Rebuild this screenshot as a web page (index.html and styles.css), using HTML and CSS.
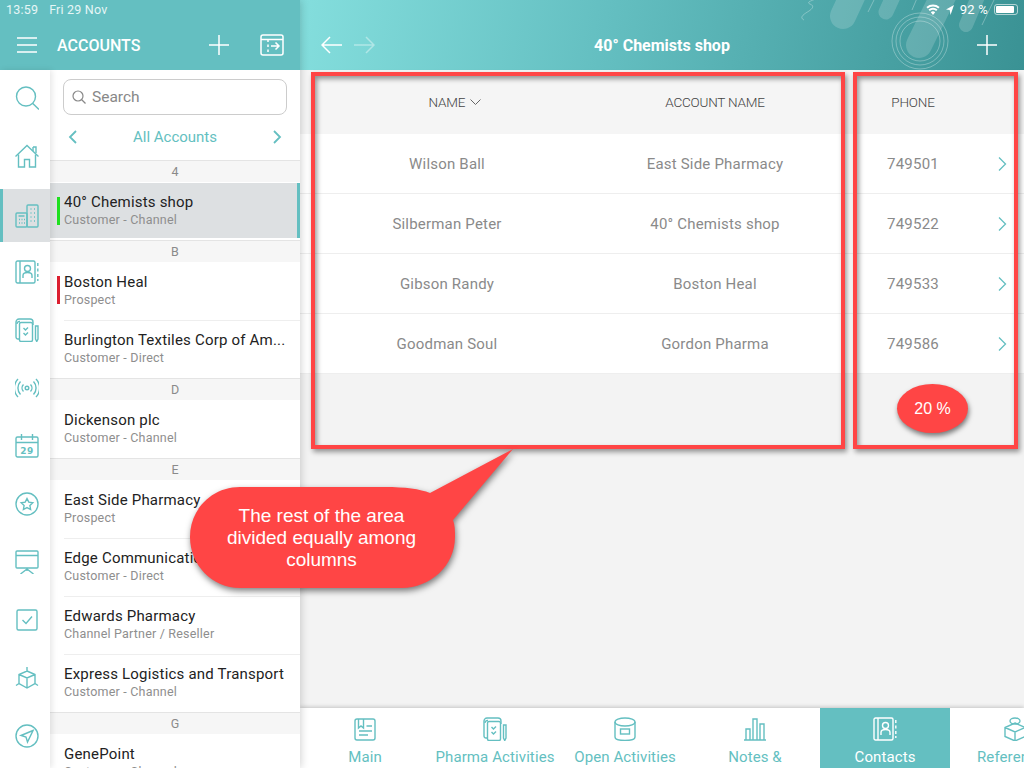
FILE: index.html
```html
<!DOCTYPE html>
<html lang="en">
<head>
    <meta charset="UTF-8">
    <meta name="viewport" content="width=device-width, initial-scale=1.0">
    <title>Accounts</title>
    <link rel="stylesheet" href="styles.css">
</head>
<body>
    <svg class="sprites" width="0" height="0">
        <symbol id="i-contacts" viewBox="0 0 24 24">
            <rect x="1" y="1" width="19" height="22" rx="1.5"/>
            <path d="M5 1v22"/>
            <circle cx="12.5" cy="8.5" r="3"/>
            <path d="M8 18v-2.5c0-2 2-3 4.500-3s4.500 1 4.500 3V18"/>
            <path d="M22.800 3v3M22.800 8.500v3M22.800 14v3M22.800 19v2"/>
        </symbol>
        <symbol id="i-pharma" viewBox="0 0 24 24">
            <path d="M4 21H3a2 2 0 0 1-2-2V4a3 3 0 0 1 3-3h11a3 3 0 0 1 3 3v3"/>
            <path d="M2 6a2.500 2.500 0 0 1 3-2.500"/>
            <rect x="4.500" y="4.500" width="13" height="19" rx="1.500"/>
            <path d="M8.500 10l2 2 2.500-2.500M8.500 15l2 2 2.500-2.500"/>
            <path d="M20.500 8h2.500v13l-1.250 2.500L20.500 21z"/>
        </symbol>
    </svg>

    <div class="app">
        <aside class="left">
            <header class="left-head">
                <div class="status">
                    <span class="status-time">13:59</span>
                    <span>Fri 29 Nov</span>
                </div>
                <div class="left-bar">
                    <svg class="ic-menu" width="20" height="16" viewBox="0 0 20 16"><path d="M0 1h20M0 8h20M0 15h20"/></svg>
                    <span class="left-title">ACCOUNTS</span>
                    <svg class="ic-plus" width="20" height="20" viewBox="0 0 20 20"><path d="M10 0v20M0 10h20"/></svg>
                    <svg class="ic-split" width="24" height="22" viewBox="0 0 24 22">
                        <rect x="1" y="1" width="22" height="20" rx="2"/>
                        <path d="M1 5.500h22M8 5.500V8M8 10.500v2.500M8 15.500V18"/>
                        <path d="M11 12h8M15.500 8.500l3.500 3.500-3.500 3.500"/>
                    </svg>
                </div>
            </header>
            <div class="left-body">
                <nav class="rail">
                    <a class="rail-item"><svg class="ic" viewBox="0 0 24 24"><circle cx="11" cy="10.500" r="9.500"/><path d="M17.800 17.500L24 23.500"/></svg></a>
                    <a class="rail-item"><svg class="ic" viewBox="0 0 24 24"><path d="M0.500 12.500L12 1.500l11.500 11"/><path d="M18 3v4M18 3h3v6"/><path d="M3.500 10.500V23h6v-7.500h5V23h6V10.500"/></svg></a>
                    <a class="rail-item active"><svg class="ic" viewBox="0 0 24 24"><rect x="1" y="9" width="11" height="14" rx="1"/><rect x="12" y="1" width="11" height="22" rx="1"/><path d="M3.500 12h6M4 15.500h1M6.500 15.500h1M9 15.500h1M4 19h1M6.500 19h1M9 19h1M15.500 5h1M19 5h1M15.500 9h1M19 9h1M15.500 13h1M19 13h1M15.500 17h1M19 17h1"/></svg></a>
                    <a class="rail-item"><svg class="ic"><use href="#i-contacts"/></svg></a>
                    <a class="rail-item"><svg class="ic"><use href="#i-pharma"/></svg></a>
                    <a class="rail-item"><svg class="ic" viewBox="0 0 24 24"><circle cx="12" cy="12" r="1.800"/><path d="M8.500 8.500a5 5 0 0 0 0 7M15.500 8.500a5 5 0 0 1 0 7M5.500 5.500a9.500 9.500 0 0 0 0 13M18.500 5.500a9.500 9.500 0 0 1 0 13M3 3a13 13 0 0 0 0 18M21 3a13 13 0 0 1 0 18"/></svg></a>
                    <a class="rail-item"><svg class="ic" viewBox="0 0 24 24"><rect x="1" y="3" width="22" height="20" rx="1.500"/><path d="M1 8.500h22M6.500 0v6M17.500 0v6"/><text class="ic-date" x="12" y="20">29</text></svg></a>
                    <a class="rail-item"><svg class="ic" viewBox="0 0 24 24"><circle cx="12" cy="12" r="11"/><path d="M12 6.500l1.800 3.600 4 .6-2.900 2.800.7 4L12 15.600l-3.600 1.900.7-4-2.900-2.800 4-.6z"/></svg></a>
                    <a class="rail-item"><svg class="ic" viewBox="0 0 24 24"><rect x="1" y="1" width="22" height="17" rx="1"/><path d="M1 5.500h22M12 18v3M12 19L5.500 24M12 19l6.500 5"/></svg></a>
                    <a class="rail-item"><svg class="ic" viewBox="0 0 24 24"><rect x="2" y="2" width="20" height="20" rx="1.500"/><path d="M7.500 12l3.500 3.500 6-7"/></svg></a>
                    <a class="rail-item"><svg class="ic" viewBox="0 0 24 24"><path d="M12 5l8 3.500v9L12 22l-8-4.500v-9zM4 8.500L12 12l8-3.500M12 12v10M12 5V1M4 17.500L1 19.500M20 17.500l3 2"/></svg></a>
                    <a class="rail-item"><svg class="ic" viewBox="0 0 24 24"><circle cx="12" cy="12" r="11"/><path d="M18 6.500L6 11.500l5 1.500 1.500 5z"/></svg></a>
                </nav>
                <div class="list">
                    <div class="search">
                        <svg class="ic-search" width="14" height="14" viewBox="0 0 14 14"><circle cx="6" cy="6" r="5"/><path d="M9.500 9.500L13.500 13.500"/></svg>
                        <span>Search</span>
                    </div>
                    <div class="list-nav">
                        <svg class="ic-chev" width="9" height="14" viewBox="0 0 9 14"><path d="M8 1L2 7l6 6"/></svg>
                        <span>All Accounts</span>
                        <svg class="ic-chev" width="9" height="14" viewBox="0 0 9 14"><path d="M1 1l6 6-6 6"/></svg>
                    </div>
                    <div class="section">4</div>
                    <div class="item selected flag-green">
                        <div class="item-name">40° Chemists shop</div>
                        <div class="item-sub">Customer - Channel</div>
                    </div>
                    <div class="section">B</div>
                    <div class="item flag-red">
                        <div class="item-name">Boston Heal</div>
                        <div class="item-sub">Prospect</div>
                    </div>
                    <div class="item">
                        <div class="item-name">Burlington Textiles Corp of Am...</div>
                        <div class="item-sub">Customer - Direct</div>
                    </div>
                    <div class="section">D</div>
                    <div class="item">
                        <div class="item-name">Dickenson plc</div>
                        <div class="item-sub">Customer - Channel</div>
                    </div>
                    <div class="section">E</div>
                    <div class="item">
                        <div class="item-name">East Side Pharmacy</div>
                        <div class="item-sub">Prospect</div>
                    </div>
                    <div class="item">
                        <div class="item-name">Edge Communications</div>
                        <div class="item-sub">Customer - Direct</div>
                    </div>
                    <div class="item">
                        <div class="item-name">Edwards Pharmacy</div>
                        <div class="item-sub">Channel Partner / Reseller</div>
                    </div>
                    <div class="item">
                        <div class="item-name">Express Logistics and Transport</div>
                        <div class="item-sub">Customer - Channel</div>
                    </div>
                    <div class="section">G</div>
                    <div class="item">
                        <div class="item-name">GenePoint</div>
                        <div class="item-sub">Customer - Channel</div>
                    </div>
                </div>
            </div>
        </aside>

        <main class="main">
            <header class="main-head">
                <svg class="head-art" width="260" height="70" viewBox="0 0 260 70">
                    <g class="art-pills">
                        <path d="M79 16L92 -12" stroke-width="26"/>
                        <path d="M122 12L132 -10" stroke-width="15"/>
                        <path d="M202 25L216 -8" stroke-width="14"/>
                        <path d="M155 45L182 -10" stroke-width="26"/>
                    </g>
                    <g class="art-lines">
                        <path d="M104 12L112 -4M218 25L230 0M148 10L154 -4"/>
                        <path d="M40 20c-6-3 2-7 5-9s6-5 1-7 4-4 8-6"/>
                        <circle cx="156" cy="41" r="28"/>
                        <circle cx="156" cy="41" r="24"/>
                        <circle cx="156" cy="41" r="20"/>
                    </g>
                </svg>
                <div class="status status-right">
                    <svg class="ic-wifi" width="14" height="11" viewBox="0 0 14 11"><path d="M7 11L4.800 8.300a3.400 3.400 0 0 1 4.400 0zM3.800 7.100L2.500 5.500a7 7 0 0 1 9 0l-1.300 1.600a5 5 0 0 0-6.400 0zM1.700 4.500L.4 3a10.300 10.300 0 0 1 13.200 0l-1.300 1.500a8.300 8.300 0 0 0-10.600 0z"/></svg>
                    <svg class="ic-loc" width="8" height="10" viewBox="0 0 8 10"><path d="M8 0L0 4.500l3.700.6L4.500 10z"/></svg>
                    <span>92 %</span>
                    <span class="battery"><span class="battery-fill"></span></span>
                </div>
                <div class="main-bar">
                    <div class="main-arrows">
                        <svg class="ic-arrow" width="21" height="18" viewBox="0 0 21 18"><path d="M21 9H1M9 1L1 9l8 8"/></svg>
                        <svg class="ic-arrow dim" width="21" height="18" viewBox="0 0 21 18"><path d="M0 9h20M12 1l8 8-8 8"/></svg>
                    </div>
                    <span class="main-title">40° Chemists shop</span>
                    <svg class="ic-plus" width="20" height="20" viewBox="0 0 20 20"><path d="M10 0v20M0 10h20"/></svg>
                </div>
            </header>

            <section class="grid">
                <div class="row row-head">
                    <div class="col-sorted">NAME <svg class="ic-sort" width="11" height="6" viewBox="0 0 11 6"><path d="M.5.5l5 5 5-5"/></svg></div>
                    <div>ACCOUNT NAME</div>
                    <div>PHONE</div>
                    <div></div>
                </div>
                <div class="row">
                    <div>Wilson Ball</div>
                    <div>East Side Pharmacy</div>
                    <div>749501</div>
                    <svg class="ic-next" width="9" height="14" viewBox="0 0 9 14"><path d="M1 .5L7.500 7 1 13.500"/></svg>
                </div>
                <div class="row">
                    <div>Silberman Peter</div>
                    <div>40° Chemists shop</div>
                    <div>749522</div>
                    <svg class="ic-next" width="9" height="14" viewBox="0 0 9 14"><path d="M1 .5L7.500 7 1 13.500"/></svg>
                </div>
                <div class="row">
                    <div>Gibson Randy</div>
                    <div>Boston Heal</div>
                    <div>749533</div>
                    <svg class="ic-next" width="9" height="14" viewBox="0 0 9 14"><path d="M1 .5L7.500 7 1 13.500"/></svg>
                </div>
                <div class="row">
                    <div>Goodman Soul</div>
                    <div>Gordon Pharma</div>
                    <div>749586</div>
                    <svg class="ic-next" width="9" height="14" viewBox="0 0 9 14"><path d="M1 .5L7.500 7 1 13.500"/></svg>
                </div>
            </section>

            <nav class="tabs">
                <a class="tab">
                    <svg class="ic" viewBox="0 0 24 24"><rect x="2" y="2" width="20" height="21" rx="2"/><path d="M5.500 2v9l2.500-2 2.500 2V2M13.500 9H19M6 14h13M6 18h9"/></svg>
                    <span>Main</span>
                </a>
                <a class="tab">
                    <svg class="ic"><use href="#i-pharma"/></svg>
                    <span>Pharma Activities</span>
                </a>
                <a class="tab">
                    <svg class="ic" viewBox="0 0 24 24"><ellipse cx="12" cy="5" rx="10" ry="4"/><path d="M2 5v15c0 2 4 3.500 10 3.500s10-1.500 10-3.500V5"/><rect x="7.500" y="12" width="9" height="5"/></svg>
                    <span>Open Activities</span>
                </a>
                <a class="tab">
                    <svg class="ic" viewBox="0 0 24 24"><path d="M1 23h22M3 23V12h4v11M10 23V2h4v21M17 23V7h4v16"/></svg>
                    <span>Notes &amp;</span>
                </a>
                <a class="tab current">
                    <svg class="ic"><use href="#i-contacts"/></svg>
                    <span>Contacts</span>
                </a>
                <a class="tab">
                    <svg class="ic" viewBox="0 0 24 24"><path d="M12 6l10 4.500v9L12 24 2 19.500v-9zM2 10.500L12 15l10-4.500M12 15v9"/><ellipse cx="12" cy="4" rx="5" ry="3"/></svg>
                    <span>References</span>
                </a>
            </nav>
        </main>
    </div>

    <!-- annotations drawn over the screenshot -->
    <div class="mark mark-left"></div>
    <div class="mark mark-right"></div>
    <div class="badge">20 %</div>
    <div class="callout">
        <svg class="callout-shape" width="323" height="139" viewBox="0 0 323 139">
            <path d="M50 38H195C215 38 230 40 240 44L323 0 263 71C265 76 265 82 265 88 265 117 240 139 212 139H50C22 139 0 116 0 88S22 38 50 38z"/>
        </svg>
        <p class="callout-text">The rest of the area<br>divided equally among<br>columns</p>
    </div>
</body>
</html>
```

FILE: styles.css
```css
* {
    box-sizing: border-box;
}
html, body {
    margin: 0;
    height: 768px;
    overflow: hidden;
}
body {
    font-family: Roboto, "Liberation Sans", sans-serif;
    color: #222;
}
svg {
    fill: none;
    flex: none;
}
.sprites {
    display: block;
}

.app {
    display: grid;
    grid-template-columns: 300px 1fr;
    height: 768px;
}

/* left column */
.left {
    display: flex;
    flex-direction: column;
    min-height: 0;
    position: relative;
    z-index: 2;
    box-shadow: 1px 0 8px rgba(0, 0, 0, .18);
}
.left-head {
    height: 70px;
    background: #64bfc1;
    color: #fff;
    padding: 0 16px 0 6px;
    flex: none;
}
.status {
    display: flex;
    gap: 11px;
    height: 19px;
    align-items: center;
    font-size: 12.500px;
    letter-spacing: .2px;
    color: #e6f6f6;
}
.left-bar {
    display: flex;
    align-items: center;
    height: 32px;
    margin-top: 10px;
    padding-left: 11px;
}
.left-bar svg, .main-bar svg {
    stroke: #fff;
    stroke-width: 1.500;
}
.ic-menu {
    margin-right: 20px;
}
.left-title {
    font-size: 16px;
    font-weight: 500;
    width: 152px;
    padding-top: 1px;
}
.ic-split {
    margin-left: 31px;
}
.left-body {
    display: flex;
    flex: 1;
    min-height: 0;
}
.rail {
    width: 50px;
    flex: none;
    background: #fff;
    position: relative;
    z-index: 1;
    box-shadow: 2px 0 6px rgba(0, 0, 0, .1);
}
.rail-item {
    display: flex;
    align-items: center;
    justify-content: center;
    height: 58px;
    padding: 0 0 2px 4px;
}
.rail-item.active {
    height: 53px;
    margin: 3px 0 2px;
    padding: 0 0 0 1px;
    background: #dde0e2;
    border-left: 3px solid #64bfc1;
}
.ic {
    width: 24px;
    height: 24px;
    stroke: #64bfc1;
    stroke-width: 1.400;
}
.ic-date {
    fill: #64bfc1;
    stroke: none;
    font-family: "DejaVu Sans", sans-serif;
    font-size: 9px;
    font-weight: 700;
    text-anchor: middle;
    letter-spacing: .5px;
}

.list {
    width: 250px;
    flex: none;
    background: #fff;
    overflow: hidden;
}
.search {
    display: flex;
    align-items: center;
    gap: 6px;
    height: 36px;
    margin: 9px 13px 0;
    padding-left: 8px;
    border: 1px solid #ccc;
    border-radius: 8px;
    font-size: 15.500px;
    color: #888;
}
.ic-search {
    stroke: #888;
    stroke-width: 1.200;
}
.list-nav {
    display: flex;
    align-items: center;
    justify-content: space-between;
    height: 23px;
    margin-top: 10px;
    padding: 0 18px;
    font-size: 15px;
    color: #64bfc1;
}
.ic-chev {
    stroke: #64bfc1;
    stroke-width: 1.800;
}
.section {
    height: 22px;
    line-height: 22px;
    text-align: center;
    font-size: 12.500px;
    color: #8a8a8a;
    background: #f6f6f6;
    border-top: 1px solid #e4e4e4;
}
.list-nav + .section {
    margin-top: 12px;
}
.item {
    position: relative;
    height: 58px;
    padding: 11px 0 0 14px;
}
.item + .item::before {
    content: "";
    position: absolute;
    left: 14px;
    right: 0;
    top: 0;
    border-top: 1px solid #eee;
}
.item.selected {
    height: 55px;
    margin: 1px 0 2px;
    padding-top: 10px;
    background: #dde0e2;
    border-right: 3px solid #64bfc1;
}
.flag-green::after, .flag-red::after {
    content: "";
    position: absolute;
    left: 7px;
    width: 3px;
    top: 14px;
    height: 28px;
    background: #1fe01f;
}
.flag-red::after {
    background: #dc1f30;
}
.item-name {
    font-size: 15px;
    line-height: 18px;
    white-space: nowrap;
    letter-spacing: .2px;
    color: #222;
}
.item-sub {
    font-size: 12.500px;
    line-height: 17px;
    letter-spacing: .2px;
    color: #8e8e8e;
}

/* main panel */
.main {
    display: flex;
    flex-direction: column;
    background: #f3f3f3;
    min-width: 0;
    position: relative;
}
.main-head {
    height: 70px;
    flex: none;
    position: relative;
    overflow: hidden;
    background: linear-gradient(100deg, #84dedd 0%, #64bfc1 42%, #3a9294 100%);
    color: #fff;
}
.head-art {
    position: absolute;
    right: 0;
    top: 0;
}
.art-pills {
    stroke: rgba(255, 255, 255, .17);
    stroke-linecap: round;
}
.art-lines {
    stroke: rgba(255, 255, 255, .3);
    stroke-width: 1;
}
.status-right {
    position: relative;
    justify-content: flex-end;
    gap: 6px;
    padding-right: 6px;
    color: #fff;
    font-size: 13px;
}
.ic-wifi, .ic-loc {
    fill: #fff;
}
.battery {
    display: block;
    width: 24px;
    height: 11px;
    padding: 1px;
    border: 1px solid rgba(255, 255, 255, .6);
    border-radius: 3px;
}
.battery-fill {
    display: block;
    height: 100%;
    width: 92%;
    background: #fff;
    border-radius: 1px;
}
.main-bar {
    position: relative;
    display: grid;
    grid-template-columns: 1fr auto 1fr;
    align-items: center;
    height: 32px;
    margin-top: 10px;
    padding: 0 27px 0 21px;
}
.main-arrows {
    display: flex;
    gap: 12px;
}
.main-bar .ic-plus {
    justify-self: end;
}
.ic-arrow.dim {
    opacity: .4;
}
.main-title {
    font-size: 16px;
    font-weight: 700;
    margin-left: 6px;
}

.grid {
    background: #fff;
}
.row {
    display: grid;
    grid-template-columns: 268px 268px 128px 1fr;
    align-items: center;
    height: 60px;
    padding: 1px 0 0 13px;
    text-align: center;
    font-size: 15px;
    letter-spacing: .2px;
    color: #8a8a8a;
    border-bottom: 1px solid #eee;
}
.row-head {
    height: 64px;
    padding-top: 0;
    background: #f5f5f5;
    font-size: 13.500px;
    font-weight: 300;
    letter-spacing: -.2px;
    color: #444;
    border: 0;
}
.col-sorted {
    padding-left: 16px;
}
.ic-sort {
    stroke: #666;
    margin-left: 2px;
    vertical-align: 2px;
}
.ic-next {
    stroke: #64bfc1;
    stroke-width: 1.300;
    justify-self: end;
    margin-right: 17px;
}

.tabs {
    display: flex;
    margin-top: auto;
    height: 60px;
    background: #fff;
    overflow: hidden;
    box-shadow: 0 -1px 4px rgba(0, 0, 0, .2);
    position: relative;
}
.tab {
    width: 130px;
    flex: none;
    display: flex;
    flex-direction: column;
    align-items: center;
    padding-top: 9px;
    font-size: 15px;
    letter-spacing: .1px;
    white-space: nowrap;
    color: #64bfc1;
}
.tab span {
    margin-top: 7px;
}
.tab.current {
    background: #64bfc1;
    color: #fff;
}
.tab.current .ic {
    stroke: #fff;
}

/* annotations */
.mark {
    position: absolute;
    top: 72px;
    height: 377px;
    border: 4px solid #ff4545;
    box-shadow: 2px 3px 5px rgba(0, 0, 0, .4), inset 2px 3px 5px rgba(0, 0, 0, .4);
    z-index: 5;
}
.mark-left {
    left: 311px;
    width: 534px;
}
.mark-right {
    left: 853px;
    width: 165px;
}
.badge {
    position: absolute;
    left: 897px;
    top: 384px;
    width: 71px;
    height: 49px;
    line-height: 49px;
    border-radius: 50%;
    background: #ff4545;
    color: #fff;
    font-family: "Liberation Sans", sans-serif;
    font-size: 16px;
    text-align: center;
    box-shadow: 1px 3px 5px rgba(0, 0, 0, .5);
    z-index: 6;
}
.callout {
    position: absolute;
    left: 190px;
    top: 449px;
    width: 323px;
    height: 139px;
    z-index: 6;
}
.callout-shape {
    position: absolute;
    left: 0;
    top: 0;
    overflow: visible;
    fill: #ff4545;
    filter: drop-shadow(1px 3px 3px rgba(0, 0, 0, .5));
}
.callout-text {
    position: absolute;
    left: 0;
    top: 56px;
    width: 263px;
    margin: 0;
    text-align: center;
    font-family: "Liberation Sans", sans-serif;
    font-size: 19px;
    line-height: 22px;
    color: #fff;
}
```
